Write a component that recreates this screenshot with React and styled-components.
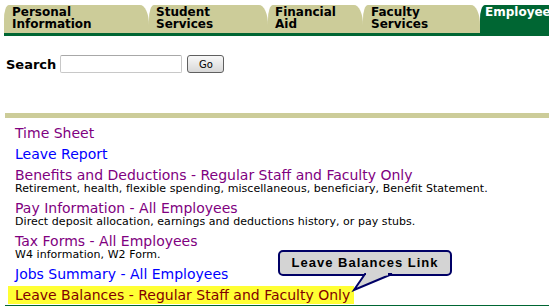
import React from "react";
import styled, { createGlobalStyle } from "styled-components";

const GlobalStyle = createGlobalStyle`
  body {
    margin: 0;
    background: #ffffff;
    font-family: "DejaVu Sans", Verdana, sans-serif;
  }
`;

const tabs = [
  { label: ["Personal", "Information"], width: 145, pad: 8 },
  { label: ["Student", "Services"], width: 119, pad: 7 },
  { label: ["Financial", "Aid"], width: 95, pad: 7 },
  { label: ["Faculty", "Services"], width: 117, pad: 8 },
  { label: ["Employee", ""], width: 0, pad: 5, active: true },
];

const links = [
  { text: "Time Sheet", color: "#800080" },
  { text: "Leave Report", color: "#0000ff" },
  {
    text: "Benefits and Deductions - Regular Staff and Faculty Only",
    color: "#800080",
    desc: "Retirement, health, flexible spending, miscellaneous, beneficiary, Benefit Statement.",
  },
  {
    text: "Pay Information - All Employees",
    color: "#800080",
    desc: "Direct deposit allocation, earnings and deductions history, or pay stubs.",
  },
  {
    text: "Tax Forms - All Employees",
    color: "#800080",
    desc: "W4 information, W2 Form.",
  },
  { text: "Jobs Summary - All Employees", color: "#0000ff" },
];

function App() {
  return (
    <Page>
      <GlobalStyle />
      <TabBar>
        {tabs.map((t, i) => (
          <Tab key={i} $width={t.width} $pad={t.pad} $active={t.active}>
            <TabLine>{t.label[0]}</TabLine>
            <TabLine>{t.label[1]}</TabLine>
          </Tab>
        ))}
      </TabBar>
      <GreenRule />

      <SearchRow>
        <SearchLabel>Search</SearchLabel>
        <SearchInput type="text" />
        <GoButton>Go</GoButton>
      </SearchRow>

      <TanRule />

      <LinkList>
        {links.map((l, i) => (
          <Item key={i}>
            <LinkText $color={l.color}>{l.text}</LinkText>
            {l.desc && <Desc>{l.desc}</Desc>}
          </Item>
        ))}
        <Highlight>
          <LinkText $color="#800000" $tight>
            Leave Balances - Regular Staff and Faculty Only
          </LinkText>
        </Highlight>
      </LinkList>
      <BottomRule />

      <Callout>
        Leave Balances Link
        <Tail width="60" height="30" viewBox="0 0 60 30">
          <polygon
            points="11,0 0,16 38,0"
            fill="#d4d4d4"
            stroke="#000066"
            strokeWidth="2"
            strokeLinejoin="miter"
          />
          <rect x="12" y="-1.5" width="22" height="3" fill="#d4d4d4" />
        </Tail>
      </Callout>
    </Page>
  );
}

const Page = styled.div`
  position: relative;
  width: 549px;
  height: 306px;
  overflow: hidden;
`;

const TabBar = styled.div`
  display: flex;
  padding: 5px 0 0 4px;
  height: 28px;
`;

const Tab = styled.div`
  flex: ${(p) => (p.$width ? `0 0 ${p.$width}px` : "1")};
  display: flex;
  flex-direction: column;
  box-sizing: border-box;
  padding: 1px 0 0 ${(p) => p.$pad}px;
  background: ${(p) => (p.$active ? "#006633" : "#cccc99")};
  color: ${(p) => (p.$active ? "#ffffff" : "#000000")};
  font-size: 12px;
  font-weight: bold;
  white-space: nowrap;
  overflow: hidden;
  border-top-left-radius: 5px 14px;
  border-top-right-radius: ${(p) => (p.$active ? "0" : "9px 20px")};
`;

const TabLine = styled.span`
  display: block;
  height: 12px;
  line-height: 12px;
`;

const GreenRule = styled.div`
  height: 3px;
  margin-left: 4px;
  background: #006633;
`;

const SearchRow = styled.div`
  display: flex;
  align-items: center;
  gap: 5px;
  margin: 19px 0 0 6px;
`;

const SearchLabel = styled.span`
  font-size: 13px;
  font-weight: bold;
  color: #000;
`;

const SearchInput = styled.input`
  box-sizing: border-box;
  width: 122px;
  height: 18px;
  margin: 0 0 0 -1px;
  border: 1px solid #c8c8c8;
  border-top-color: #a8a8a8;
  border-radius: 2px;
`;

const GoButton = styled.button`
  box-sizing: border-box;
  width: 37px;
  height: 18px;
  padding: 0;
  font-family: "DejaVu Sans", Verdana, sans-serif;
  font-size: 10px;
  color: #000;
  border: 1px solid #606060;
  border-radius: 3px;
  background: linear-gradient(#f8f8f8, #d8d8d8);
`;

const TanRule = styled.div`
  height: 5px;
  margin: 40px 0 0 5px;
  background: #cccc99;
`;

const LinkList = styled.div`
  padding: 5px 0 0 15px;
`;

const Item = styled.div`
  display: flex;
  flex-direction: column;
`;

const LinkText = styled.span`
  display: block;
  font-size: 14px;
  line-height: ${(p) => (p.$tight ? "18px" : "21px")};
  color: ${(p) => p.$color};
  white-space: nowrap;
`;

const Desc = styled.span`
  font-size: 11px;
  line-height: 12px;
  letter-spacing: 0.05px;
  margin: -3px 0 3px;
  color: #000;
  white-space: nowrap;
`;

const Highlight = styled.div`
  width: fit-content;
  margin: 1px 0 0 -7px;
  padding: 0 4px 0 7px;
  background: #ffff33;
`;

const BottomRule = styled.div`
  height: 2px;
  margin: 1px 0 0 5px;
  background: #006633;
`;

const Callout = styled.div`
  position: absolute;
  left: 278px;
  top: 250px;
  width: 174px;
  height: 26px;
  box-sizing: border-box;
  border: 2px solid #000066;
  border-radius: 5px;
  background: #d4d4d4;
  font-family: "Liberation Sans", Arial, sans-serif;
  font-size: 13px;
  font-weight: bold;
  letter-spacing: 1px;
  line-height: 22px;
  text-align: center;
  color: #000;
`;

const Tail = styled.svg`
  position: absolute;
  left: 74px;
  top: 22px;
  overflow: visible;
`;

export default App;
